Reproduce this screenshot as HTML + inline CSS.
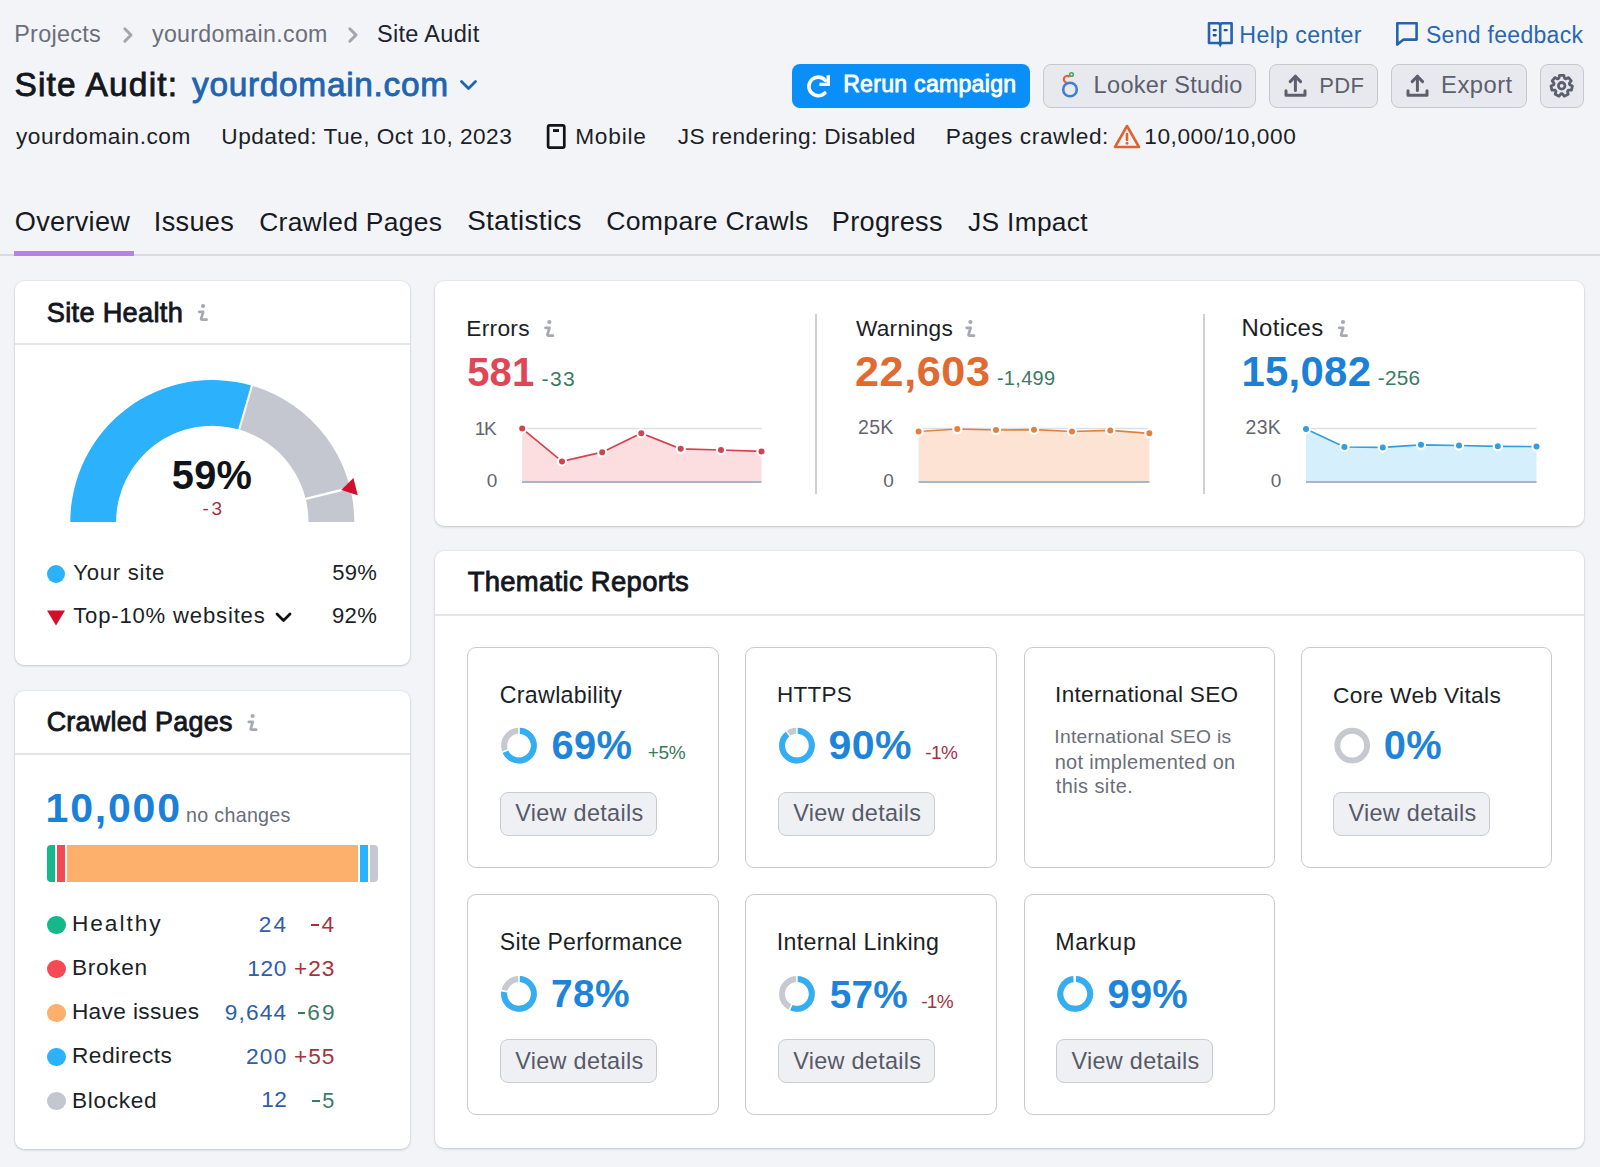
<!DOCTYPE html>
<html><head><meta charset="utf-8">
<style>
html,body{margin:0;padding:0;}
body{width:1600px;height:1167px;overflow:hidden;background:#f3f4f8;position:relative;font-family:"Liberation Sans",sans-serif;color:#171a22;}
.t{position:absolute;line-height:1;white-space:nowrap;}
.card{position:absolute;background:#fff;border-radius:9px;box-shadow:0 1px 2.5px rgba(40,45,60,0.20),0 0 0 1px rgba(40,45,60,0.04);}
.hdiv{position:absolute;height:2px;background:#e4e5ea;}
.btn{position:absolute;background:#e8e9ee;border:1px solid #c6c8d0;border-radius:8px;box-sizing:border-box;}
.tc{position:absolute;background:#fff;border:1.5px solid #c9cace;border-radius:9px;box-sizing:border-box;}
svg{position:absolute;overflow:visible;}
</style></head>
<body>

<div class="t" style="top:22.67px;font-size:23.43px;color:#6b6e7a;letter-spacing:0.3px;left:14.13px;">Projects</div>
<div class="t" style="top:22.85px;font-size:23.21px;color:#6b6e7a;letter-spacing:0.3px;left:152.00px;">yourdomain.com</div>
<div class="t" style="top:22.55px;font-size:23.57px;color:#202330;letter-spacing:0.3px;left:376.94px;">Site Audit</div>
<svg style="left:0;top:0" width="10" height="10">
 <path d="M124.8 28.8 L131 35 L124.8 41.2" fill="none" stroke="#a2a5ae" stroke-width="3" stroke-linecap="round" stroke-linejoin="round"/>
 <path d="M349.8 28.8 L356 35 L349.8 41.2" fill="none" stroke="#a2a5ae" stroke-width="3" stroke-linecap="round" stroke-linejoin="round"/>
</svg>
<div class="t" style="top:23.64px;font-size:23.22px;color:#2867b2;letter-spacing:0.344px;left:1239.34px;">Help center</div>
<div class="t" style="top:23.83px;font-size:23.0px;color:#2867b2;letter-spacing:0.3px;left:1425.96px;">Send feedback</div>
<svg style="left:0;top:0" width="10" height="10">
 <path d="M1209 23.3 H1218.8 L1220.2 24.6 L1221.6 23.3 H1231.6 V43 H1209 Z" fill="none" stroke="#2563ad" stroke-width="2.6" stroke-linejoin="round"/>
 <path d="M1220.2 24 V43" stroke="#2563ad" stroke-width="2.6"/>
 <path d="M1217.2 42 L1220.2 47.6 L1223.2 42 Z" fill="#2563ad"/>
 <g fill="#1f4f92"><rect x="1212.6" y="28.9" width="4.2" height="2.4" rx="1.1"/><rect x="1212.6" y="34" width="4.2" height="2.4" rx="1.1"/><rect x="1223.6" y="28.9" width="4.2" height="2.4" rx="1.1"/></g>
 <path d="M1397.3 44.6 V23.3 H1416.6 V39.6 H1403.6 Z" fill="none" stroke="#2563ad" stroke-width="2.6" stroke-linejoin="round"/>
</svg>
<div class="t" style="top:68.46px;font-size:33.48px;color:#14161d;letter-spacing:1.184px;left:14.49px;-webkit-text-stroke:0.85px #14161d;">Site Audit:</div>
<div class="t" style="top:68.26px;font-size:33.48px;color:#2164b0;letter-spacing:0.672px;left:192.00px;-webkit-text-stroke:0.85px #2164b0;">yourdomain.com</div>
<svg style="left:0;top:0" width="10" height="10"><path d="M461.5 81.5 L468.5 88.5 L475.5 81.5" fill="none" stroke="#2164b0" stroke-width="2.8" stroke-linecap="round" stroke-linejoin="round"/></svg>
<div style="position:absolute;left:792px;top:64px;width:238px;height:44px;background:#0a8ef7;border-radius:8px"></div>
<div class="t" style="top:73.10px;font-size:23.04px;color:#ffffff;letter-spacing:0.3px;left:843.16px;-webkit-text-stroke:0.85px #ffffff;">Rerun campaign</div>
<svg style="left:0;top:0" width="10" height="10">
 <path d="M825.3 80.4 A9.3 9.3 0 1 0 824.8 93" fill="none" stroke="#fff" stroke-width="3.6" stroke-linecap="round"/>
 <path d="M828.3 75.2 V84.4 H819.4" fill="none" stroke="#fff" stroke-width="3.4" stroke-linecap="butt" stroke-linejoin="miter"/>
</svg>
<div class="btn" style="left:1043px;top:64px;width:213px;height:44px"></div>
<div class="t" style="top:73.67px;font-size:23.54px;color:#5c5f6d;letter-spacing:0.3px;left:1093.62px;">Looker Studio</div>
<svg style="left:0;top:0" width="10" height="10">
 <circle cx="1070" cy="89.5" r="6.8" fill="none" stroke="#3d7fd6" stroke-width="2.6"/>
 <path d="M1066.5 82.5 A3.3 3.3 0 1 1 1069.5 77" fill="none" stroke="#e0623c" stroke-width="2.2"/>
 <circle cx="1071.5" cy="74.5" r="1.8" fill="none" stroke="#4aa564" stroke-width="1.6"/>
</svg>
<div class="btn" style="left:1269px;top:64px;width:109px;height:44px"></div>
<div class="t" style="top:74.96px;font-size:22.02px;color:#5c5f6d;letter-spacing:0.3px;left:1319.24px;">PDF</div>
<div class="btn" style="left:1391px;top:64px;width:136px;height:44px"></div>
<div class="t" style="top:73.49px;font-size:23.76px;color:#5c5f6d;letter-spacing:0.494px;left:1441.10px;">Export</div>
<svg style="left:0;top:0" width="10" height="10">
 <path d="M1286 90.8 V95.2 H1305 V90.8" fill="none" stroke="#5c5f6d" stroke-width="3" stroke-linecap="round" stroke-linejoin="round"/>
 <path d="M1295.4 90.5 V76.5" fill="none" stroke="#5c5f6d" stroke-width="3" stroke-linecap="round"/>
 <path d="M1290.2 81.6 L1295.4 76.2 L1300.6 81.6" fill="none" stroke="#5c5f6d" stroke-width="3" stroke-linecap="round" stroke-linejoin="round"/>
</svg>
<svg style="left:0;top:0" width="10" height="10">
 <path d="M1408 90.8 V95.2 H1427 V90.8" fill="none" stroke="#5c5f6d" stroke-width="3" stroke-linecap="round" stroke-linejoin="round"/>
 <path d="M1417.4 90.5 V76.5" fill="none" stroke="#5c5f6d" stroke-width="3" stroke-linecap="round"/>
 <path d="M1412.2 81.6 L1417.4 76.2 L1422.6 81.6" fill="none" stroke="#5c5f6d" stroke-width="3" stroke-linecap="round" stroke-linejoin="round"/>
</svg>
<div class="btn" style="left:1540px;top:64px;width:44px;height:44px"></div>
<svg style="left:0;top:0" width="10" height="10">
 <polygon points="1559.57,75.31 1563.83,75.31 1564.52,78.31 1565.80,78.93 1568.57,77.60 1571.22,80.92 1569.31,83.34 1569.63,84.72 1572.40,86.06 1571.45,90.21 1568.37,90.21 1567.49,91.32 1568.17,94.33 1564.33,96.17 1562.41,93.77 1560.99,93.77 1559.07,96.17 1555.23,94.33 1555.91,91.32 1555.03,90.21 1551.95,90.21 1551.00,86.06 1553.77,84.72 1554.09,83.34 1552.18,80.92 1554.83,77.60 1557.60,78.93 1558.88,78.31" fill="none" stroke="#5c5f6d" stroke-width="2.8" stroke-linejoin="round"/>
 <circle cx="1561.7" cy="85.8" r="3.3" fill="none" stroke="#5c5f6d" stroke-width="2.8"/>
</svg>
<div class="t" style="top:125.00px;font-size:22.68px;color:#1c1f27;letter-spacing:0.52px;left:16.00px;">yourdomain.com</div>
<div class="t" style="top:125.00px;font-size:22.68px;color:#1c1f27;letter-spacing:0.479px;left:221.30px;">Updated: Tue, Oct 10, 2023</div>
<svg style="left:0;top:0" width="10" height="10">
 <rect x="548.1" y="125.4" width="16.2" height="22.3" rx="1.6" fill="none" stroke="#111318" stroke-width="2.7"/>
 <rect x="553" y="129.1" width="6" height="2.9" fill="#111318"/>
</svg>
<div class="t" style="top:125.00px;font-size:22.68px;color:#1c1f27;letter-spacing:0.786px;left:575.19px;">Mobile</div>
<div class="t" style="top:125.00px;font-size:22.68px;color:#1c1f27;letter-spacing:0.395px;left:677.66px;">JS rendering: Disabled</div>
<div class="t" style="top:125.00px;font-size:22.68px;color:#1c1f27;letter-spacing:0.594px;left:945.69px;">Pages crawled:</div>
<svg style="left:0;top:0" width="10" height="10">
 <path d="M1127 126 L1139 147 H1115 Z" fill="none" stroke="#dc6430" stroke-width="2.6" stroke-linejoin="round"/>
 <path d="M1127 134 V140" stroke="#dc6430" stroke-width="2.6" stroke-linecap="round"/>
 <circle cx="1127" cy="143.3" r="1.4" fill="#dc6430"/>
</svg>
<div class="t" style="top:125.00px;font-size:22.68px;color:#1c1f27;letter-spacing:0.538px;left:1144.30px;">10,000/10,000</div>
<div class="t" style="top:208.03px;font-size:27.13px;color:#171a22;letter-spacing:0.3px;left:14.78px;">Overview</div>
<div class="t" style="top:208.04px;font-size:27.12px;color:#171a22;letter-spacing:0.3px;left:153.86px;">Issues</div>
<div class="t" style="top:208.64px;font-size:26.42px;color:#171a22;letter-spacing:0.3px;left:259.18px;">Crawled Pages</div>
<div class="t" style="top:207.40px;font-size:27.88px;color:#171a22;letter-spacing:0.3px;left:467.15px;">Statistics</div>
<div class="t" style="top:208.45px;font-size:26.64px;color:#171a22;letter-spacing:0.3px;left:606.17px;">Compare Crawls</div>
<div class="t" style="top:208.03px;font-size:27.13px;color:#171a22;letter-spacing:0.3px;left:831.83px;">Progress</div>
<div class="t" style="top:208.69px;font-size:26.35px;color:#171a22;letter-spacing:0.3px;left:968.10px;">JS Impact</div>
<div style="position:absolute;left:0;top:254px;width:1600px;height:1.5px;background:#d9dbe1"></div>
<div style="position:absolute;left:14px;top:251px;width:120px;height:5px;background:#b384e6"></div>
<div class="card" style="left:15px;top:281px;width:395px;height:384px"></div>
<div class="card" style="left:15px;top:691px;width:395px;height:458px"></div>
<div class="card" style="left:435px;top:281px;width:1149px;height:245px"></div>
<div class="card" style="left:435px;top:551px;width:1149px;height:597px"></div>
<div class="hdiv" style="left:15px;top:343px;width:395px"></div>
<div class="hdiv" style="left:15px;top:753px;width:395px"></div>
<div class="hdiv" style="left:435px;top:613.5px;width:1149px"></div>
<div class="t" style="top:298.98px;font-size:27.2px;color:#14161d;letter-spacing:0.3px;left:46.78px;-webkit-text-stroke:0.85px #14161d;">Site Health</div>
<svg style="left:0;top:0" width="10" height="10"><circle cx="203" cy="306" r="2.1" fill="#a6a9b1"/><path d="M199.2 311.8 H203.2 L201.2 318.4 Q200.8 319.7 202.3 319.7 H206.6" fill="none" stroke="#a6a9b1" stroke-width="2.7" stroke-linecap="round" stroke-linejoin="round"/></svg>
<svg style="left:0;top:0" width="10" height="10">
 <path d="M70.30 522.00 A142 142 0 0 1 251.92 385.64 L239.14 429.62 A96.2 96.2 0 0 0 116.10 522.00 Z" fill="#2cb1fd"/>
 <path d="M251.92 385.64 A142 142 0 0 1 354.30 522.00 L308.50 522.00 A96.2 96.2 0 0 0 239.14 429.62 Z" fill="#c5c7d0"/>
 <line x1="252.20" y1="384.68" x2="238.86" y2="430.58" stroke="#fff" stroke-width="2"/>
 <line x1="351.11" y1="487.65" x2="304.71" y2="499.13" stroke="#fff" stroke-width="2.5"/>
 <polygon points="341.21,490.10 357.72,495.18 353.44,477.90" fill="#d0102c"/>
</svg>
<div class="t" style="top:455.92px;font-size:39.79px;color:#111318;font-weight:bold;letter-spacing:0.3px;left:212px;transform:translateX(-50%);">59%</div>
<div class="t" style="top:498.52px;font-size:19px;color:#a8303f;left:212.3px;transform:translateX(-50%);"><span style="margin-right:2.5px">-</span>3</div>
<div style="position:absolute;left:47px;top:564.5px;width:18px;height:18px;border-radius:50%;background:#2cb1fd"></div>
<div class="t" style="top:561.96px;font-size:22.14px;color:#1c1f27;letter-spacing:0.747px;left:73.16px;">Your site</div>
<div class="t" style="top:562.05px;font-size:22.03px;color:#1c1f27;letter-spacing:0.3px;right:1223.20px;margin-right:-0.3px;">59%</div>
<svg style="left:0;top:0" width="10" height="10"><polygon points="47,610.5 65,610.5 56,625.5" fill="#d0102c"/><path d="M277 614 L283.5 620.5 L290 614" fill="none" stroke="#111" stroke-width="2.8" stroke-linecap="round" stroke-linejoin="round"/></svg>
<div class="t" style="top:605.26px;font-size:22.14px;color:#1c1f27;letter-spacing:0.803px;left:73.16px;">Top-10% websites</div>
<div class="t" style="top:605.31px;font-size:22.08px;color:#1c1f27;letter-spacing:0.3px;right:1223.19px;margin-right:-0.3px;">92%</div>
<div class="t" style="top:709.24px;font-size:26.89px;color:#14161d;letter-spacing:0.3px;left:46.66px;-webkit-text-stroke:0.85px #14161d;">Crawled Pages</div>
<svg style="left:0;top:0" width="10" height="10"><circle cx="252.6" cy="716" r="2.1" fill="#a6a9b1"/><path d="M248.79999999999998 721.8 H252.79999999999998 L250.79999999999998 728.4 Q250.4 729.7 251.9 729.7 H256.2" fill="none" stroke="#a6a9b1" stroke-width="2.7" stroke-linecap="round" stroke-linejoin="round"/></svg>
<div class="t" style="top:788.26px;font-size:41.04px;color:#1b80d8;font-weight:bold;letter-spacing:1.804px;left:45.54px;">10,000</div>
<div class="t" style="top:806.34px;font-size:19.68px;color:#6b6e78;letter-spacing:0.3px;left:186.02px;">no changes</div>
<div style="position:absolute;left:47px;top:844.5px;width:331px;height:37.5px;border-radius:4px;overflow:hidden;background:#fff"><div style="position:absolute;left:0;top:0;width:8px;height:38px;background:#14b88a"></div><div style="position:absolute;left:10px;top:0;width:7.75px;height:38px;background:#f34a56"></div><div style="position:absolute;left:20.25px;top:0;width:290.5px;height:38px;background:#fdb06b"></div><div style="position:absolute;left:313px;top:0;width:7.8px;height:38px;background:#2cb1fd"></div><div style="position:absolute;left:323px;top:0;width:8px;height:38px;background:#c5c8d2"></div></div>
<div style="position:absolute;left:47px;top:915.5px;width:18.5px;height:18.5px;border-radius:50%;background:#14b88a"></div>
<div class="t" style="top:912.30px;font-size:22.68px;color:#1c1f27;letter-spacing:1.988px;left:71.89px;">Healthy</div>
<div class="t" style="top:913.10px;font-size:22.68px;color:#2d5ea6;letter-spacing:2.026px;right:1313.88px;margin-right:-2.026px;">24</div>
<div class="t" style="top:913.10px;font-size:22.68px;color:#a8303f;letter-spacing:1.033px;right:1265.91px;margin-right:-1.033px;">4</div>
<div style="position:absolute;left:311.3px;top:923.9px;width:7.7px;height:1.9px;background:#a8303f"></div>
<div style="position:absolute;left:47px;top:959.5px;width:18.5px;height:18.5px;border-radius:50%;background:#f34a56"></div>
<div class="t" style="top:956.35px;font-size:22.68px;color:#1c1f27;letter-spacing:0.679px;left:71.89px;">Broken</div>
<div class="t" style="top:957.15px;font-size:22.68px;color:#2d5ea6;letter-spacing:0.616px;right:1313.63px;margin-right:-0.616px;">120</div>
<div class="t" style="top:957.15px;font-size:22.68px;color:#a8303f;letter-spacing:0.949px;right:1265.56px;margin-right:-0.949px;">+23</div>
<div style="position:absolute;left:47px;top:1003.6px;width:18.5px;height:18.5px;border-radius:50%;background:#fdb06b"></div>
<div class="t" style="top:1000.40px;font-size:22.68px;color:#1c1f27;letter-spacing:0.362px;left:71.89px;">Have issues</div>
<div class="t" style="top:1001.20px;font-size:22.68px;color:#2d5ea6;letter-spacing:1.172px;right:1313.88px;margin-right:-1.172px;">9,644</div>
<div class="t" style="top:1001.20px;font-size:22.68px;color:#3a7b64;letter-spacing:2.18px;right:1265.43px;margin-right:-2.18px;">69</div>
<div style="position:absolute;left:297.8px;top:1012.0px;width:7.7px;height:1.9px;background:#3a7b64"></div>
<div style="position:absolute;left:47px;top:1047.7px;width:18.5px;height:18.5px;border-radius:50%;background:#2cb1fd"></div>
<div class="t" style="top:1044.45px;font-size:22.68px;color:#1c1f27;letter-spacing:0.536px;left:71.89px;">Redirects</div>
<div class="t" style="top:1045.25px;font-size:22.68px;color:#2d5ea6;letter-spacing:1.333px;right:1313.63px;margin-right:-1.333px;">200</div>
<div class="t" style="top:1045.25px;font-size:22.68px;color:#a8303f;letter-spacing:0.949px;right:1265.56px;margin-right:-0.949px;">+55</div>
<div style="position:absolute;left:47px;top:1091.7px;width:18.5px;height:18.5px;border-radius:50%;background:#c5c7d0"></div>
<div class="t" style="top:1088.50px;font-size:22.68px;color:#1c1f27;letter-spacing:0.675px;left:71.89px;">Blocked</div>
<div class="t" style="top:1089.42px;font-size:22.54px;color:#2d5ea6;letter-spacing:0.3px;right:1313.32px;margin-right:-0.3px;">12</div>
<div class="t" style="top:1090.15px;font-size:21.68px;color:#3a7b64;letter-spacing:0.3px;right:1265.61px;margin-right:-0.3px;">5</div>
<div style="position:absolute;left:312.3px;top:1100.1px;width:7.7px;height:1.9px;background:#3a7b64"></div>
<div style="position:absolute;left:815.2px;top:313.5px;width:1.8px;height:180px;background:#cdd0d6"></div>
<div style="position:absolute;left:1202.8px;top:313.5px;width:1.8px;height:180px;background:#cdd0d6"></div>
<div class="t" style="top:317.13px;font-size:22.76px;color:#1c1f27;letter-spacing:0.3px;left:466.18px;">Errors</div>
<svg style="left:0;top:0" width="10" height="10"><circle cx="549.3" cy="322" r="2.1" fill="#a6a9b1"/><path d="M545.5 327.8 H549.5 L547.5 334.4 Q547.0999999999999 335.7 548.5999999999999 335.7 H552.9" fill="none" stroke="#a6a9b1" stroke-width="2.7" stroke-linecap="round" stroke-linejoin="round"/></svg>
<div class="t" style="top:352.24px;font-size:40px;color:#df4656;font-weight:bold;letter-spacing:0.05px;left:467.30px;">581</div>
<div class="t" style="top:367.57px;font-size:21.06px;color:#3a7b64;letter-spacing:1.329px;left:541.55px;">-33</div>
<div class="t" style="top:418.72px;font-size:19px;color:#63666f;letter-spacing:-1.165px;right:1103.25px;margin-right:1.165px;">1K</div>
<div class="t" style="top:471.42px;font-size:19px;color:#63666f;right:1102.81px;">0</div>
<svg style="left:0;top:0" width="10" height="10">
 <line x1="522" y1="428.6" x2="761.5" y2="428.6" stroke="#dddfe4" stroke-width="1.5"/>
 <polygon points="522.2,482 522.2,428.6 562.0,461.4 602.2,452.2 641.3,433.3 680.7,448.8 721.0,450.0 761.5,451.4 761.5,482" fill="#fcdde0"/>
 <line x1="522" y1="482" x2="761.5" y2="482" stroke="#aab4c4" stroke-width="1.8"/>
 <polyline points="522.2,428.6 562.0,461.4 602.2,452.2 641.3,433.3 680.7,448.8 721.0,450.0 761.5,451.4" fill="none" stroke="#d3434f" stroke-width="1.7"/>
 <circle cx="522.2" cy="428.6" r="4.1" fill="#d3434f" stroke="#fff" stroke-width="2.2"/><circle cx="562.0" cy="461.4" r="4.1" fill="#d3434f" stroke="#fff" stroke-width="2.2"/><circle cx="602.2" cy="452.2" r="4.1" fill="#d3434f" stroke="#fff" stroke-width="2.2"/><circle cx="641.3" cy="433.3" r="4.1" fill="#d3434f" stroke="#fff" stroke-width="2.2"/><circle cx="680.7" cy="448.8" r="4.1" fill="#d3434f" stroke="#fff" stroke-width="2.2"/><circle cx="721.0" cy="450.0" r="4.1" fill="#d3434f" stroke="#fff" stroke-width="2.2"/><circle cx="761.5" cy="451.4" r="4.1" fill="#d3434f" stroke="#fff" stroke-width="2.2"/>
</svg>
<div class="t" style="top:317.23px;font-size:22.65px;color:#1c1f27;letter-spacing:0.3px;left:855.89px;">Warnings</div>
<svg style="left:0;top:0" width="10" height="10"><circle cx="970.4" cy="322" r="2.1" fill="#a6a9b1"/><path d="M966.6 327.8 H970.6 L968.6 334.4 Q968.1999999999999 335.7 969.6999999999999 335.7 H974.0" fill="none" stroke="#a6a9b1" stroke-width="2.7" stroke-linecap="round" stroke-linejoin="round"/></svg>
<div class="t" style="top:349.53px;font-size:43.2px;color:#e2692f;font-weight:bold;letter-spacing:0.566px;left:854.99px;">22,603</div>
<div class="t" style="top:368.47px;font-size:20.0px;color:#3a7b64;letter-spacing:0.3px;left:996.90px;">-1,499</div>
<div class="t" style="top:418.22px;font-size:19.59px;color:#63666f;letter-spacing:0.3px;right:706.62px;margin-right:-0.3px;">25K</div>
<div class="t" style="top:471.42px;font-size:19px;color:#63666f;right:706.21px;">0</div>
<svg style="left:0;top:0" width="10" height="10">
 <line x1="918.6" y1="428.6" x2="1149.4" y2="428.6" stroke="#dddfe4" stroke-width="1.5"/>
 <polygon points="918.6,482 918.6,431.5 957.3,429.0 996.0,430.0 1034.0,429.7 1072.0,431.5 1110.3,430.4 1149.4,433.3 1149.4,482" fill="#fde3d3"/>
 <line x1="918.6" y1="482" x2="1149.4" y2="482" stroke="#aab4c4" stroke-width="1.8"/>
 <polyline points="918.6,431.5 957.3,429.0 996.0,430.0 1034.0,429.7 1072.0,431.5 1110.3,430.4 1149.4,433.3" fill="none" stroke="#e0823e" stroke-width="1.7"/>
 <circle cx="918.6" cy="431.5" r="4.1" fill="#e0823e" stroke="#fff" stroke-width="2.2"/><circle cx="957.3" cy="429.0" r="4.1" fill="#e0823e" stroke="#fff" stroke-width="2.2"/><circle cx="996.0" cy="430.0" r="4.1" fill="#e0823e" stroke="#fff" stroke-width="2.2"/><circle cx="1034.0" cy="429.7" r="4.1" fill="#e0823e" stroke="#fff" stroke-width="2.2"/><circle cx="1072.0" cy="431.5" r="4.1" fill="#e0823e" stroke="#fff" stroke-width="2.2"/><circle cx="1110.3" cy="430.4" r="4.1" fill="#e0823e" stroke="#fff" stroke-width="2.2"/><circle cx="1149.4" cy="433.3" r="4.1" fill="#e0823e" stroke="#fff" stroke-width="2.2"/>
</svg>
<div class="t" style="top:316.10px;font-size:23.98px;color:#1c1f27;letter-spacing:0.3px;left:1241.48px;">Notices</div>
<svg style="left:0;top:0" width="10" height="10"><circle cx="1343" cy="322" r="2.1" fill="#a6a9b1"/><path d="M1339.2 327.8 H1343.2 L1341.2 334.4 Q1340.8 335.7 1342.3 335.7 H1346.6" fill="none" stroke="#a6a9b1" stroke-width="2.7" stroke-linecap="round" stroke-linejoin="round"/></svg>
<div class="t" style="top:350.64px;font-size:41.89px;color:#1b80d8;font-weight:bold;letter-spacing:0.3px;left:1241.39px;">15,082</div>
<div class="t" style="top:367.85px;font-size:20.73px;color:#3a7b64;letter-spacing:0.3px;left:1377.77px;">-256</div>
<div class="t" style="top:418.31px;font-size:19.48px;color:#63666f;letter-spacing:0.3px;right:319.22px;margin-right:-0.3px;">23K</div>
<div class="t" style="top:471.42px;font-size:19px;color:#63666f;right:318.81px;">0</div>
<svg style="left:0;top:0" width="10" height="10">
 <line x1="1306" y1="428.6" x2="1536.5" y2="428.6" stroke="#dddfe4" stroke-width="1.5"/>
 <polygon points="1306.0,482 1306.0,429.0 1344.4,447.0 1382.8,447.4 1421.0,444.8 1459.0,445.5 1497.8,446.3 1536.5,446.6 1536.5,482" fill="#d6effc"/>
 <line x1="1306" y1="482" x2="1536.5" y2="482" stroke="#aab4c4" stroke-width="1.8"/>
 <polyline points="1306.0,429.0 1344.4,447.0 1382.8,447.4 1421.0,444.8 1459.0,445.5 1497.8,446.3 1536.5,446.6" fill="none" stroke="#2e9fdf" stroke-width="1.7"/>
 <circle cx="1306.0" cy="429.0" r="4.1" fill="#2e9fdf" stroke="#fff" stroke-width="2.2"/><circle cx="1344.4" cy="447.0" r="4.1" fill="#2e9fdf" stroke="#fff" stroke-width="2.2"/><circle cx="1382.8" cy="447.4" r="4.1" fill="#2e9fdf" stroke="#fff" stroke-width="2.2"/><circle cx="1421.0" cy="444.8" r="4.1" fill="#2e9fdf" stroke="#fff" stroke-width="2.2"/><circle cx="1459.0" cy="445.5" r="4.1" fill="#2e9fdf" stroke="#fff" stroke-width="2.2"/><circle cx="1497.8" cy="446.3" r="4.1" fill="#2e9fdf" stroke="#fff" stroke-width="2.2"/><circle cx="1536.5" cy="446.6" r="4.1" fill="#2e9fdf" stroke="#fff" stroke-width="2.2"/>
</svg>
<div class="t" style="top:568.46px;font-size:27.46px;color:#14161d;letter-spacing:0.3px;left:467.65px;-webkit-text-stroke:0.85px #14161d;">Thematic Reports</div>
<div class="tc" style="left:467.4px;top:646.8px;width:251.5px;height:221px"></div>
<div class="t" style="top:683.84px;font-size:23.22px;color:#1c1f27;letter-spacing:0.308px;left:499.74px;">Crawlability</div>
<div class="t" style="top:725.62px;font-size:39.9px;color:#1e84da;font-weight:bold;letter-spacing:0.3px;left:551.60px;">69%</div>
<div class="t" style="top:743.32px;font-size:19px;color:#3b7a5a;letter-spacing:-0.352px;left:647.80px;">+5%</div>
<div class="btn" style="left:499.79999999999995px;top:791.5px;width:157px;height:44px;background:#eff0f3;border-color:#c9ccd3"></div>
<div class="t" style="top:802.37px;font-size:23.43px;color:#575a68;letter-spacing:0.3px;left:515.28px;">View details</div>
<div class="tc" style="left:745.3px;top:646.8px;width:251.5px;height:221px"></div>
<div class="t" style="top:684.47px;font-size:22.48px;color:#1c1f27;letter-spacing:0.3px;left:777.00px;">HTTPS</div>
<div class="t" style="top:724.66px;font-size:41.04px;color:#1e84da;font-weight:bold;letter-spacing:0.441px;left:828.56px;">90%</div>
<div class="t" style="top:743.32px;font-size:19px;color:#a8303f;letter-spacing:-0.5px;left:925.14px;">-1%</div>
<div class="btn" style="left:777.6999999999999px;top:791.5px;width:157px;height:44px;background:#eff0f3;border-color:#c9ccd3"></div>
<div class="t" style="top:802.37px;font-size:23.43px;color:#575a68;letter-spacing:0.3px;left:793.18px;">View details</div>
<div class="tc" style="left:1023.6px;top:646.8px;width:251.5px;height:221px"></div>
<div class="t" style="top:684.38px;font-size:22.59px;color:#1c1f27;letter-spacing:0.3px;left:1055.07px;">International SEO</div>
<div class="t" style="top:726.50px;font-size:19.25px;color:#6b6e78;letter-spacing:0.3px;left:1054.27px;">International SEO is</div>
<div class="t" style="top:751.69px;font-size:19.98px;color:#6b6e78;letter-spacing:0.3px;left:1054.70px;">not implemented on</div>
<div class="t" style="top:775.69px;font-size:19.98px;color:#6b6e78;letter-spacing:0.419px;left:1055.70px;">this site.</div>
<div class="tc" style="left:1300.6px;top:646.8px;width:251.5px;height:221px"></div>
<div class="t" style="top:684.23px;font-size:22.77px;color:#1c1f27;letter-spacing:0.3px;left:1332.96px;">Core Web Vitals</div>
<div class="t" style="top:725.66px;font-size:39.86px;color:#1e84da;font-weight:bold;letter-spacing:0.3px;left:1383.81px;">0%</div>
<div class="btn" style="left:1333.0px;top:791.5px;width:157px;height:44px;background:#eff0f3;border-color:#c9ccd3"></div>
<div class="t" style="top:802.37px;font-size:23.43px;color:#575a68;letter-spacing:0.3px;left:1348.48px;">View details</div>
<div class="tc" style="left:467.4px;top:894.2px;width:251.5px;height:221px"></div>
<div class="t" style="top:931.40px;font-size:23.04px;color:#1c1f27;letter-spacing:0.3px;left:499.86px;">Site Performance</div>
<div class="t" style="top:975.46px;font-size:38.91px;color:#1e84da;font-weight:bold;letter-spacing:0.3px;left:551.04px;">78%</div>
<div class="btn" style="left:499.79999999999995px;top:1038.9px;width:157px;height:44px;background:#eff0f3;border-color:#c9ccd3"></div>
<div class="t" style="top:1049.77px;font-size:23.43px;color:#575a68;letter-spacing:0.3px;left:515.28px;">View details</div>
<div class="tc" style="left:745.3px;top:894.2px;width:251.5px;height:221px"></div>
<div class="t" style="top:931.24px;font-size:23.22px;color:#1c1f27;letter-spacing:0.323px;left:776.71px;">Internal Linking</div>
<div class="t" style="top:975.58px;font-size:38.77px;color:#1e84da;font-weight:bold;letter-spacing:0.3px;left:829.64px;">57%</div>
<div class="t" style="top:991.72px;font-size:19px;color:#a8303f;letter-spacing:-0.65px;left:921.14px;">-1%</div>
<div class="btn" style="left:777.6999999999999px;top:1038.9px;width:157px;height:44px;background:#eff0f3;border-color:#c9ccd3"></div>
<div class="t" style="top:1049.77px;font-size:23.43px;color:#575a68;letter-spacing:0.3px;left:793.18px;">View details</div>
<div class="tc" style="left:1023.6px;top:894.2px;width:251.5px;height:221px"></div>
<div class="t" style="top:931.24px;font-size:23.22px;color:#1c1f27;letter-spacing:0.63px;left:1055.24px;">Markup</div>
<div class="t" style="top:974.62px;font-size:39.9px;color:#1e84da;font-weight:bold;letter-spacing:0.3px;left:1107.40px;">99%</div>
<div class="btn" style="left:1056.0px;top:1038.9px;width:157px;height:44px;background:#eff0f3;border-color:#c9ccd3"></div>
<div class="t" style="top:1049.77px;font-size:23.43px;color:#575a68;letter-spacing:0.3px;left:1071.48px;">View details</div>
<svg style="left:0;top:0" width="10" height="10"><circle cx="519.0" cy="745.5999999999999" r="14.9" fill="none" stroke="#c6c9d0" stroke-width="5.9"/><path d="M519.00 730.70 A14.9 14.9 0 1 1 505.15 751.09" fill="none" stroke="#33aef2" stroke-width="5.9"/><line x1="519.00" y1="734.65" x2="519.00" y2="726.75" stroke="#fff" stroke-width="1.6"/><line x1="508.82" y1="749.63" x2="501.47" y2="752.54" stroke="#fff" stroke-width="1.6"/><circle cx="796.9" cy="745.5999999999999" r="14.9" fill="none" stroke="#c6c9d0" stroke-width="5.9"/><path d="M796.90 730.70 A14.9 14.9 0 1 1 788.14 733.55" fill="none" stroke="#33aef2" stroke-width="5.9"/><line x1="796.90" y1="734.65" x2="796.90" y2="726.75" stroke="#fff" stroke-width="1.6"/><line x1="790.46" y1="736.74" x2="785.82" y2="730.35" stroke="#fff" stroke-width="1.6"/><circle cx="1352.1999999999998" cy="745.5999999999999" r="14.9" fill="none" stroke="#c6c9d0" stroke-width="5.9"/><circle cx="519.0" cy="993.9" r="14.9" fill="none" stroke="#c6c9d0" stroke-width="5.9"/><path d="M519.00 979.00 A14.9 14.9 0 1 1 504.36 991.11" fill="none" stroke="#33aef2" stroke-width="5.9"/><line x1="519.00" y1="982.95" x2="519.00" y2="975.05" stroke="#fff" stroke-width="1.6"/><line x1="508.24" y1="991.85" x2="500.48" y2="990.37" stroke="#fff" stroke-width="1.6"/><circle cx="796.9" cy="993.9" r="14.9" fill="none" stroke="#c6c9d0" stroke-width="5.9"/><path d="M796.90 979.00 A14.9 14.9 0 1 1 790.56 1007.38" fill="none" stroke="#33aef2" stroke-width="5.9"/><line x1="796.90" y1="982.95" x2="796.90" y2="975.05" stroke="#fff" stroke-width="1.6"/><line x1="792.24" y1="1003.81" x2="788.87" y2="1010.96" stroke="#fff" stroke-width="1.6"/><circle cx="1075.2" cy="993.9" r="14.9" fill="none" stroke="#c6c9d0" stroke-width="5.9"/><path d="M1075.20 979.00 A14.9 14.9 0 1 1 1074.26 979.03" fill="none" stroke="#33aef2" stroke-width="5.9"/><line x1="1075.20" y1="982.95" x2="1075.20" y2="975.05" stroke="#fff" stroke-width="1.6"/><line x1="1074.51" y1="982.97" x2="1074.02" y2="975.09" stroke="#fff" stroke-width="1.6"/></svg>
</body></html>
